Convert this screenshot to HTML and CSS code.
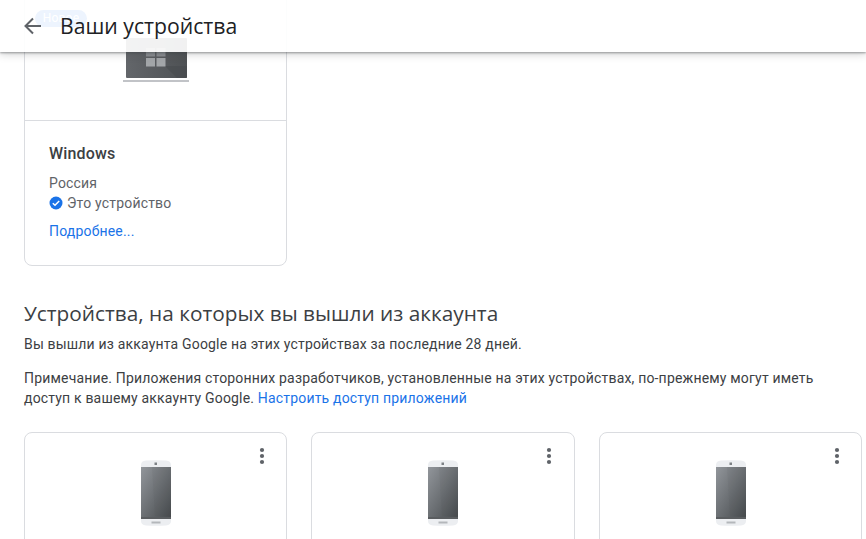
FILE: index.html
```html
<!DOCTYPE html>
<html lang="ru">
<head>
<meta charset="utf-8">
<title>Ваши устройства</title>
<link rel="stylesheet" href="styles.css">
</head>
<body>
<header class="topbar">
  <svg class="back" width="24" height="24" viewBox="0 0 24 24" aria-hidden="true"><path d="M20 12H5M12 4.5 4.5 12l7.5 7.5" fill="none" stroke="#5f6368" stroke-width="2"/></svg>
  <h1 class="topbar-title">Ваши устройства</h1>
</header>
<main class="page">
  <article class="card card-current">
    <span class="chip">Новое</span>
    <div class="card-media">
      <svg width="66" height="44" viewBox="0 0 66 44" aria-hidden="true">
        <defs>
          <linearGradient id="lap" x1="0" y1="0" x2="1" y2="0"><stop offset="0" stop-color="#63666a"/><stop offset="1" stop-color="#4e5154"/></linearGradient>
        </defs>
        <rect x="3" y="0" width="61" height="40" rx="1" fill="url(#lap)"/>
        <path d="M42 28 64 28V40H54Z" fill="#484b4e" opacity=".6"/>
        <rect x="23" y="10" width="9" height="8.500" fill="#8b8e92"/>
        <rect x="33.500" y="10" width="9" height="8.500" fill="#8b8e92"/>
        <rect x="23" y="20" width="9" height="8.500" fill="#a3a6a9"/>
        <rect x="33.500" y="20" width="9" height="8.500" fill="#a3a6a9"/>
        <rect x="0" y="42" width="66" height="2" fill="#c1c3c7"/>
      </svg>
    </div>
    <div class="card-body">
      <h3 class="device-name">Windows</h3>
      <p class="device-line">Россия</p>
      <p class="device-line device-this">
        <svg width="14" height="14" viewBox="0 0 14 14" aria-hidden="true"><circle cx="7" cy="7" r="6.500" fill="#1a73e8"/><path d="M3.800 7.200 6 9.300l4.200-4.400" fill="none" stroke="#fff" stroke-width="1.500"/></svg>
        <span>Это устройство</span>
      </p>
      <a class="link device-more" href="#">Подробнее...</a>
    </div>
  </article>

  <section class="signed-out">
    <h2 class="section-title">Устройства, на которых вы вышли из аккаунта</h2>
    <p class="section-text">Вы вышли из аккаунта Google на этих устройствах за последние 28 дней.</p>
    <p class="section-text section-note">Примечание. Приложения сторонних разработчиков, установленные на этих устройствах, по-прежнему могут иметь доступ к вашему аккаунту Google. <a class="link" href="#">Настроить доступ приложений</a></p>
    <div class="card-grid">
      <article class="card phone-card">
        <svg class="kebab" width="6" height="18" viewBox="0 0 6 18" aria-hidden="true"><circle cx="3" cy="3" r="2.100"/><circle cx="3" cy="9" r="2.100"/><circle cx="3" cy="15" r="2.100"/></svg>
        <svg class="phone" width="30" height="66" viewBox="0 0 30 66" aria-hidden="true"><use href="#phone-shape"/></svg>
      </article>
      <article class="card phone-card">
        <svg class="kebab" width="6" height="18" viewBox="0 0 6 18" aria-hidden="true"><circle cx="3" cy="3" r="2.100"/><circle cx="3" cy="9" r="2.100"/><circle cx="3" cy="15" r="2.100"/></svg>
        <svg class="phone" width="30" height="66" viewBox="0 0 30 66" aria-hidden="true"><use href="#phone-shape"/></svg>
      </article>
      <article class="card phone-card">
        <svg class="kebab" width="6" height="18" viewBox="0 0 6 18" aria-hidden="true"><circle cx="3" cy="3" r="2.100"/><circle cx="3" cy="9" r="2.100"/><circle cx="3" cy="15" r="2.100"/></svg>
        <svg class="phone" width="30" height="66" viewBox="0 0 30 66" aria-hidden="true"><use href="#phone-shape"/></svg>
      </article>
    </div>
  </section>
</main>
<svg class="defs" width="0" height="0" aria-hidden="true">
  <defs>
    <linearGradient id="scr" x1="0" y1="0" x2="1" y2="1"><stop offset="0" stop-color="#92969b"/><stop offset="1" stop-color="#45494c"/></linearGradient>
    <g id="phone-shape">
      <path d="M0 5Q0 1 5 .6 15-.3 25 .6 30 1 30 5V61Q30 65 25 65.400 15 66.300 5 65.400 0 65 0 61Z" fill="#eceef1"/>
      <rect x="0" y="7" width="30" height="52" fill="url(#scr)"/>
      <path d="M11 7H30V56H14Z" fill="#3c4043" opacity=".05"/>
      <rect x="0" y="57" width="30" height="2" fill="#5a5d60"/>
      <rect x="13.500" y="2.500" width="2.500" height="2.500" fill="#7d8185"/>
      <rect x="10.500" y="61.500" width="9" height="2" fill="#b4b7bb"/>
    </g>
  </defs>
</svg>
</body>
</html>
```
FILE: styles.css
```css
html, body {
  margin: 0;
  height: 100%;
  overflow: hidden;
  background: #fff;
  font-family: "Roboto", "Liberation Sans", sans-serif;
  font-size: 14px;
  line-height: 20px;
  letter-spacing: 0.18px;
  color: #3c4043;
}

.topbar {
  position: absolute;
  top: 0;
  left: 0;
  right: 0;
  z-index: 2;
  height: 52px;
  display: flex;
  align-items: center;
  padding-left: 21px;
  gap: 15px;
  box-sizing: border-box;
  background: rgba(255, 255, 255, 0.92);
  box-shadow: 0 1px 2px rgba(60, 64, 67, 0.45), 0 2px 8px rgba(60, 64, 67, 0.25);
}

.topbar-title {
  margin: 0;
  font-family: "Open Sans", "Roboto", sans-serif;
  font-size: 21.200px;
  font-weight: 400;
  line-height: 28px;
  letter-spacing: 0;
  color: #202124;
}

.back { flex: none; }

.page {
  display: flow-root;
  padding: 0 3.700px 0 24px;
}

.card {
  position: relative;
  box-sizing: border-box;
  border: 1px solid #dadce0;
  border-radius: 8px;
  background: #fff;
}

.card-current {
  width: 263px;
  margin-top: -68px;
}

.chip {
  position: absolute;
  top: 77px;
  left: 10px;
  width: 52px;
  height: 17px;
  border-radius: 9px;
  background: #1a73e8;
  color: #fff;
  font-size: 12px;
  line-height: 17px;
  text-align: center;
}

.card-media {
  box-sizing: border-box;
  height: 188px;
  padding-top: 105px;
  display: flex;
  justify-content: center;
  align-items: flex-start;
  border-bottom: 1px solid #dadce0;
}

.card-body {
  padding: 21px 24px 24px;
}

.device-name {
  margin: 0 0 7px;
  font-size: 16px;
  line-height: 24px;
  font-weight: 500;
  color: #3c4043;
}

.device-line {
  margin: 0;
  color: #5f6368;
}

.device-this {
  display: flex;
  align-items: center;
  gap: 4px;
}

.device-more {
  display: block;
  margin-top: 8px;
}

.link {
  color: #1a73e8;
  text-decoration: none;
}

.signed-out {
  margin-top: 32px;
}

.section-title {
  margin: 0;
  font-family: "Open Sans", "Roboto", sans-serif;
  font-size: 20.800px;
  line-height: 30px;
  font-weight: 400;
  letter-spacing: 0;
  color: #3c4043;
}

.section-text {
  margin: 6px 0 0;
  color: #3c4043;
}

.section-note {
  margin-top: 14px;
}

.card-grid {
  display: grid;
  grid-template-columns: repeat(3, 1fr);
  gap: 24px;
  margin-top: 24px;
}

.phone-card {
  height: 240px;
  display: flex;
  justify-content: center;
  align-items: flex-start;
  padding-top: 27px;
}

.kebab {
  position: absolute;
  top: 14px;
  right: 21.500px;
  fill: #5f6368;
}

.defs {
  position: absolute;
}
```
